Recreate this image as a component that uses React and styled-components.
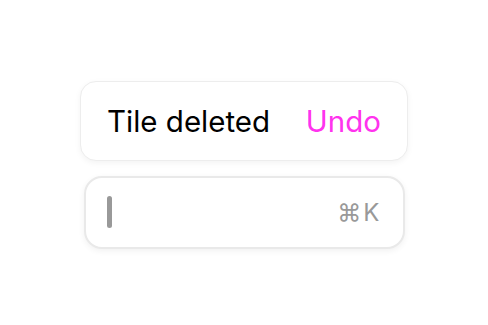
import React from "react";
import styled, { createGlobalStyle } from "styled-components";

const Global = createGlobalStyle`
  html, body { margin: 0; padding: 0; background: #ffffff; }
  body { font-family: Inter, "Noto Sans", sans-serif; }
`;

const Page = styled.div`
  height: 325px;
  width: 488px;
  display: flex;
  flex-direction: column;
  align-items: center;
  justify-content: center;
  gap: 15px;
  padding-top: 4px;
  box-sizing: border-box;
`;

const Toast = styled.div`
  box-sizing: border-box;
  width: 328px;
  height: 80px;
  padding: 0 26px 0 26px;
  display: flex;
  align-items: center;
  justify-content: space-between;
  background: #fff;
  border: 1px solid #ededed;
  border-radius: 16px;
  box-shadow: 0 2px 6px rgba(0, 0, 0, 0.05);
`;

const Message = styled.span`
  font-size: 29.5px;
  color: #000;
`;

const Action = styled.button`
  border: none;
  background: none;
  padding: 0;
  font-family: inherit;
  font-size: 29.5px;
  color: #ff33ee;
  cursor: pointer;
`;

const Search = styled.div`
  box-sizing: border-box;
  width: 321px;
  height: 73px;
  padding: 0 21px 0 21px;
  display: flex;
  align-items: center;
  justify-content: space-between;
  background: #fff;
  border: 2px solid #e9e9e9;
  border-radius: 18px;
  box-shadow: 0 2px 6px rgba(0, 0, 0, 0.06);
`;

const Caret = styled.div`
  width: 5px;
  height: 32px;
  border-radius: 3px;
  background: #999;
`;

const Shortcut = styled.span`
  font-size: 24px;
  color: #999;
  letter-spacing: 2px;
`;

export default function App() {
  return (
    <>
      <Global />
      <Page>
        <Toast>
          <Message>Tile deleted</Message>
          <Action>Undo</Action>
        </Toast>
        <Search>
          <Caret />
          <Shortcut>⌘K</Shortcut>
        </Search>
      </Page>
    </>
  );
}
